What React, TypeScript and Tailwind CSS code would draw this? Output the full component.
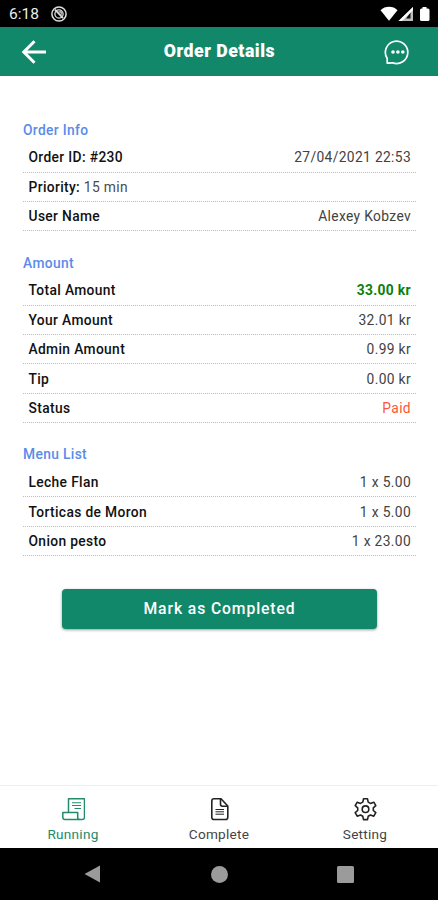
import clsx from "clsx";

interface Row {
  label: string;
  note?: string;
  value?: string;
  valueClassName?: string;
}

interface SectionProps {
  title: string;
  rows: Row[];
}

const orderInfo: Row[] = [
  { label: "Order ID: #230", value: "27/04/2021 22:53" },
  { label: "Priority:", note: "15 min" },
  { label: "User Name", value: "Alexey Kobzev" },
];

const amount: Row[] = [
  {
    label: "Total Amount",
    value: "33.00 kr",
    valueClassName: "font-bold text-[#0b800b]",
  },
  { label: "Your Amount", value: "32.01 kr" },
  { label: "Admin Amount", value: "0.99 kr" },
  { label: "Tip", value: "0.00 kr" },
  { label: "Status", value: "Paid", valueClassName: "text-[#fb5636]" },
];

const menuList: Row[] = [
  { label: "Leche Flan", value: "1 x 5.00" },
  { label: "Torticas de Moron", value: "1 x 5.00" },
  { label: "Onion pesto", value: "1 x 23.00" },
];

function StatusBar() {
  return (
    <div className="flex h-[27px] shrink-0 items-center bg-black pt-px pr-[7px] pl-[9px] text-white">
      <span className="pt-[2px] text-[15.5px] leading-none text-[#ececec]">
        6:18
      </span>
      <svg
        className="ml-3 h-4 w-4"
        viewBox="0 0 16 16"
        fill="none"
        stroke="#dedede"
      >
        <circle cx="8" cy="8" r="7.1" strokeWidth="1.5" />
        <circle cx="8" cy="8" r="4.1" strokeWidth="1.3" />
        <path d="M4 3.6l8 8.6" strokeWidth="1.7" />
        <path d="M7.5 5.8h2.7v2.9" strokeWidth="1.2" />
      </svg>
      <svg className="ml-auto h-4 w-[51px]" viewBox="0 0 51 16">
        <path d="M0.5 4.2C5-0.4 13.2-0.4 17.5 4.2L9 14.8z" fill="#fff" />
        <path d="M33 1v14H18.5z" fill="#bdbdbd" />
        <path d="M30.5 6.5v6h-4.5z" fill="#111" />
        <path d="M33 1v3L22 15h-3.5z" fill="#fff" />
        <path
          d="M42.5 1h4v1.5H48q1.5 0 1.5 1.5v9.500q0 1.500-1.500 1.500h-6.500q-1.500 0-1.500-1.500V4q0-1.500 1.500-1.500h1z"
          fill="#fff"
        />
      </svg>
    </div>
  );
}

function Header() {
  return (
    <header className="flex h-[49px] shrink-0 items-center bg-[#12886a] pr-7 pl-[21px] text-white">
      <svg
        className="h-6 w-[26px]"
        viewBox="0 0 26 24"
        fill="none"
        stroke="currentColor"
        strokeWidth="3"
      >
        <path d="M25 12H2.800M13.500 1.300L2.800 12l10.700 10.700" />
      </svg>
      <h1 className="flex-1 pt-px pl-2 text-center text-[17.7px] leading-none font-black tracking-[0.5px]">
        Order Details
      </h1>
      <svg className="h-[26px] w-[26px]" viewBox="0 0 26 26" fill="none">
        <path
          d="M3.200 24.200V19.500A11.200 11.200 0 1 1 8.500 23.800z"
          stroke="currentColor"
          strokeWidth="1.7"
          strokeLinejoin="round"
        />
        <g fill="currentColor">
          <circle cx="9" cy="13" r="1.800" />
          <circle cx="13.900" cy="13" r="1.800" />
          <circle cx="18.800" cy="13" r="1.800" />
        </g>
      </svg>
    </header>
  );
}

function Section({ title, rows }: SectionProps) {
  return (
    <section>
      <h2 className="h-[23.5px] pt-px text-[13.8px] leading-[18px] font-medium tracking-[0.35px] text-[#5a8bea]">
        {title}
      </h2>
      {rows.map((row) => (
        <div
          key={row.label}
          className="flex h-[29.4px] items-center justify-between border-b border-dotted border-[#bdbdbd] pt-[2px] pr-[5px] pl-[5.5px] text-[13.8px] leading-none tracking-[0.35px]"
        >
          <span className="font-medium text-[#111]">
            {row.label}
            {row.note && (
              <span className="font-normal text-[#4a4a4a]"> {row.note}</span>
            )}
          </span>
          {row.value && (
            <span className={row.valueClassName ?? "text-[#424242]"}>
              {row.value}
            </span>
          )}
        </div>
      ))}
    </section>
  );
}

function TabBar() {
  return (
    <nav className="grid h-[63px] shrink-0 grid-cols-3 border-t border-[#eeeeee] bg-white pt-[11px] text-[13.6px] leading-none tracking-[0.25px] text-[#444]">
      <div className="flex flex-col items-center gap-[7px] text-[#238a6b]">
        <svg
          className="h-6 w-6"
          viewBox="0 0 24 24"
          fill="none"
          stroke="currentColor"
          strokeWidth="1.5"
          strokeLinejoin="round"
        >
          <path d="M7.500 15.500V1.800h16v18.700q0 2-2.300 2h-2.200q-2.300 0-2.300-2.300v-4.700H1.800v4.700q0 2.300 2.300 2.300h15.500" />
          <path d="M11 5.800h9M11 8.500h9M13.500 11.500h6.500" strokeWidth="1.1" />
        </svg>
        <span>Running</span>
      </div>
      <div className="flex flex-col items-center gap-[7px]">
        <svg
          className="h-6 w-6"
          viewBox="0 0 24 24"
          fill="none"
          stroke="#222"
          strokeWidth="1.6"
          strokeLinejoin="round"
        >
          <path d="M14 1.800H7Q4.800 1.800 4.800 4v16.200q0 2.300 2.200 2.300h11.500q2.300 0 2.300-2.300V9z" />
          <path d="M13.500 1.800v5.500q0 1.900 1.900 1.900h5.300" />
          <path d="M8.500 12.500h8.500M8.500 14.800h8.500M8.500 17.200h8.500" strokeWidth="1" />
        </svg>
        <span>Complete</span>
      </div>
      <div className="flex flex-col items-center gap-[7px]">
        <svg
          className="h-6 w-6"
          viewBox="0 0 24 24"
          fill="none"
          stroke="#222"
          strokeWidth="1.6"
          strokeLinejoin="round"
        >
          <path d="M10.500 1.800h4l.7 3.300 2.300 1.300 3.300-1.200 2 3.500-2.500 2.200v2.600l2.500 2.200-2 3.500-3.300-1.200-2.300 1.300-.7 3.300h-4l-.7-3.300L7.500 18l-3.300 1.200-2-3.500 2.500-2.200v-2.600L2.200 8.700l2-3.500L7.500 6.400l2.300-1.300z" />
          <circle cx="12.500" cy="12.200" r="3.300" />
        </svg>
        <span>Setting</span>
      </div>
    </nav>
  );
}

function SystemNav() {
  const shape = "h-[17px] w-[17px] bg-[#9b9b9b]";

  return (
    <div className="flex h-[52px] shrink-0 items-center justify-between bg-black px-[84px]">
      <svg className="h-[18px] w-[17px]" viewBox="0 0 17 18">
        <path d="M16 0.500v17L0.500 9z" fill="#9b9b9b" />
      </svg>
      <div className={clsx(shape, "rounded-full")} />
      <div className={clsx(shape, "rounded-[1.5px]")} />
    </div>
  );
}

export default function App() {
  return (
    <div className="flex h-[900px] w-[438px] flex-col bg-white font-['Roboto',sans-serif]">
      <StatusBar />
      <Header />
      <main className="flex flex-1 flex-col gap-[21.3px] pt-[43.7px] pr-[22px] pl-[23px]">
        <Section title="Order Info" rows={orderInfo} />
        <Section title="Amount" rows={amount} />
        <Section title="Menu List" rows={menuList} />
        <button
          type="button"
          className="mx-[39px] mt-[11.5px] h-[40.5px] rounded-[4px] bg-[#12886a] text-[15.7px] leading-none font-medium tracking-[0.9px] text-white shadow-[0_1px_3px_rgba(0,0,0,0.4)]"
        >
          Mark as Completed
        </button>
      </main>
      <TabBar />
      <SystemNav />
    </div>
  );
}
